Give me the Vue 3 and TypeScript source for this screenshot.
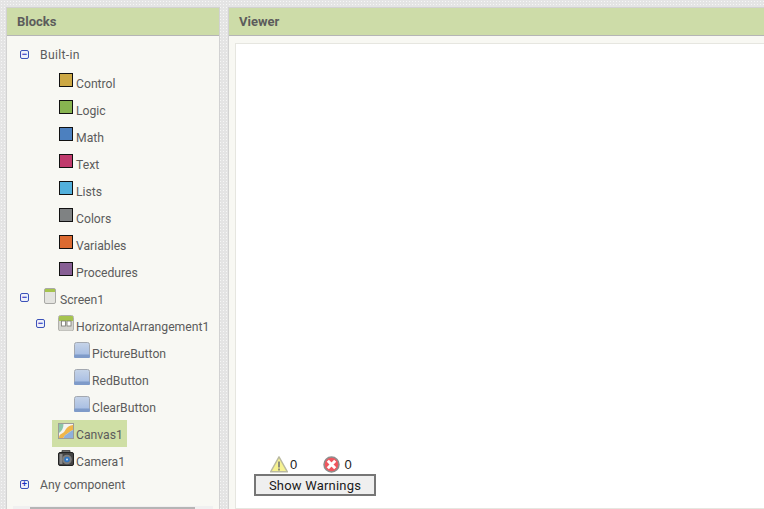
<script setup lang="ts">
type Row = {
  label: string;
  indent: number;
  toggle?: "minus" | "plus";
  swatch?: string;
  icon?: string;
  selected?: boolean;
};

const rows: Row[] = [
  { label: "Control", indent: 1, swatch: "#cca844" },
  { label: "Logic", indent: 1, swatch: "#88b450" },
  { label: "Math", indent: 1, swatch: "#4c80bf" },
  { label: "Text", indent: 1, swatch: "#c03a6c" },
  { label: "Lists", indent: 1, swatch: "#52b0dc" },
  { label: "Colors", indent: 1, swatch: "#7f8283" },
  { label: "Variables", indent: 1, swatch: "#dc6a30" },
  { label: "Procedures", indent: 1, swatch: "#875f94" },
  { label: "Screen1", indent: 0, toggle: "minus", icon: "screen" },
  { label: "HorizontalArrangement1", indent: 1, toggle: "minus", icon: "arrangement" },
  { label: "PictureButton", indent: 2, icon: "button" },
  { label: "RedButton", indent: 2, icon: "button" },
  { label: "ClearButton", indent: 2, icon: "button" },
  { label: "Canvas1", indent: 1, icon: "canvas", selected: true },
  { label: "Camera1", indent: 1, icon: "camera" },
];
</script>

<template>
  <div class="page">
    <section class="panel blocks">
      <header class="head">Blocks</header>
      <div class="tree">
        <div class="top-row built-in">
          <span class="toggle">−</span>
          <span class="top-label">Built-in</span>
        </div>
        <div
          v-for="row in rows"
          :key="row.label"
          class="row"
          :class="`indent-${row.indent}`"
        >
          <span v-if="row.toggle" class="toggle">−</span>
          <div class="item" :class="{ selected: row.selected }">
            <span v-if="row.swatch" class="swatch" :style="{ background: row.swatch }"></span>
            <svg v-else-if="row.icon === 'screen'" class="icon" viewBox="0 0 16 16">
              <rect x="2.5" y="0.5" width="11" height="15" rx="1.5" fill="#e4e4e0" stroke="#a9a9a6" />
              <rect x="3" y="1" width="10" height="3" fill="#a6c44e" />
            </svg>
            <svg v-else-if="row.icon === 'arrangement'" class="icon" viewBox="0 0 16 16">
              <rect x="0.5" y="0.5" width="15" height="15.5" rx="2" fill="#d4d4cf" stroke="#b0b0ab" />
              <path d="M1 2 Q1 1 2 1 H14 Q15 1 15 2 V6 H1 Z" fill="#a6c44e" />
              <rect x="3.5" y="6" width="4" height="5" fill="#fff" stroke="#77776f" stroke-width="0.8" />
              <rect x="9" y="6" width="4" height="5" fill="#fff" stroke="#77776f" stroke-width="0.8" />
            </svg>
            <svg v-else-if="row.icon === 'button'" class="icon" viewBox="0 0 16 16">
              <defs>
                <linearGradient id="btn-fill" x1="0" y1="0" x2="0" y2="1">
                  <stop offset="0" stop-color="#c6d4e8" />
                  <stop offset="1" stop-color="#a2bae2" />
                </linearGradient>
              </defs>
              <rect x="0.5" y="0.5" width="15" height="15" rx="2" fill="url(#btn-fill)" stroke="#a3a8b0" />
              <rect x="0" y="12.5" width="16" height="3.5" rx="1" fill="#7f9bc9" />
            </svg>
            <svg v-else-if="row.icon === 'canvas'" class="icon" viewBox="0 0 16 16">
              <rect x="0.5" y="0.5" width="15" height="15" fill="#f4f4f0" stroke="#9c9c98" />
              <path d="M1 15 C1 11 4 11 6 9 C8 7 8 3 15 2 V7 C12 8 11 10 9 11 C7 12 6 13 5.5 15 Z" fill="#f0b64a" />
              <path d="M5.5 15 C6 13 7 12 9 11 C11 10 12 8 15 7 V15 Z" fill="#8fb0dc" />
              <path d="M2 1 H5.5 C5.5 5 4 8 1 10 V1 Z" fill="#8cc6a8" />
            </svg>
            <svg v-else-if="row.icon === 'camera'" class="icon" viewBox="0 0 16 16">
              <rect x="4" y="0" width="8" height="4" rx="1" fill="#6c6c6c" stroke="#333" stroke-width="0.8" />
              <rect x="0.5" y="2.5" width="15" height="13" rx="1.5" fill="#444" stroke="#222" />
              <rect x="1.5" y="4" width="3" height="10" fill="#888" />
              <circle cx="9" cy="9.5" r="4.8" fill="#7c7c7c" />
              <circle cx="9" cy="9.5" r="2.8" fill="#2f76c4" />
              <circle cx="9" cy="9.5" r="1" fill="#c8def4" />
            </svg>
            <span class="label">{{ row.label }}</span>
          </div>
        </div>
        <div class="top-row any">
          <span class="toggle">+</span>
          <span class="top-label">Any component</span>
        </div>
      </div>
      <div class="scrollbar"><div class="thumb"></div></div>
    </section>

    <section class="panel viewer">
      <header class="head">Viewer</header>
      <div class="viewer-body">
        <div class="canvas">
          <div class="warnings">
            <div class="counts">
              <svg class="status warn" viewBox="0 0 18 17">
                <path d="M9 0.8 L17.4 15.8 H0.6 Z" fill="#f6f291" stroke="#b9b9a0" stroke-width="1.4" stroke-linejoin="round" />
                <rect x="8" y="5.5" width="2" height="6" fill="#8f8f7a" />
                <rect x="8" y="12.5" width="2" height="2" fill="#8f8f7a" />
              </svg>
              <span class="count">0</span>
              <svg class="status error" viewBox="0 0 17 17">
                <circle cx="8.5" cy="8.5" r="7.5" fill="#f0565e" stroke="#8e8e8e" stroke-width="1.5" />
                <path d="M4.8 4.8 L12.2 12.2 M12.2 4.8 L4.8 12.2" stroke="#fff" stroke-width="3" />
              </svg>
              <span class="count">0</span>
            </div>
            <button class="show-warnings">Show Warnings</button>
          </div>
        </div>
      </div>
    </section>
  </div>
</template>

<style>
html,
body {
  margin: 0;
  overflow: hidden;
}
</style>

<style scoped>
.page {
  width: 764px;
  height: 509px;
  box-sizing: border-box;
  padding: 8px 0 0 7px;
  display: flex;
  gap: 10px;
  overflow: hidden;
  font-family: Roboto, "Liberation Sans", sans-serif;
  font-size: 12.2px;
  color: #5c5c5c;
  background-color: #e4e4e4;
  background-image: radial-gradient(#f6f6f6 0.7px, transparent 0.8px);
  background-size: 3px 3px;
}

.panel {
  display: flex;
  flex-direction: column;
  background: #f8f8f3;
  flex: none;
  box-shadow: 0 0 0 1px #d2d2d2;
}

.blocks {
  width: 212px;
  height: 501px;
  position: relative;
}

.viewer {
  width: 540px;
  height: 501px;
}

.head {
  height: 28px;
  line-height: 27px;
  box-sizing: border-box;
  padding-left: 10px;
  font-weight: 700;
  font-size: 13px;
  color: #5c5c5c;
  background: #cddca8;
  border-bottom: 1px solid #b5b5b5;
}

.tree {
  padding: 5px 0 0 0;
}

.top-row {
  display: flex;
  align-items: center;
  padding-left: 13px;
}

.built-in {
  height: 26px;
  margin-bottom: 2px;
}

.any {
  height: 20px;
}

.toggle {
  width: 9px;
  height: 9px;
  flex: none;
  box-sizing: border-box;
  border: 1px solid #3c52b8;
  border-radius: 2px;
  background: #eef0fa;
  color: #1a2fc0;
  font: 700 9px/7px "Liberation Sans", sans-serif;
  text-align: center;
  overflow: hidden;
}

.top-label {
  margin: 2px 0 0 11px;
}

.built-in .top-label {
  letter-spacing: 0.3px;
}

.row {
  position: relative;
  display: flex;
  align-items: center;
  height: 27px;
}

.row .toggle {
  position: absolute;
  top: 7px;
}

.indent-0 {
  padding-left: 29px;
}

.indent-0 .toggle {
  left: 13px;
  top: 8px;
}

.indent-1 {
  padding-left: 45px;
}

.indent-1 .toggle {
  left: 29px;
}

.indent-2 {
  padding-left: 61px;
}

.item {
  display: flex;
  align-items: flex-start;
  height: 27px;
  box-sizing: border-box;
  padding: 4px 4px 0 6px;
}

.item.selected {
  background: #cfdfa5;
}

.swatch {
  width: 12px;
  height: 12px;
  border: 1px solid #111;
  box-sizing: content-box;
  flex: none;
  margin: 0 3px 0 1px;
}

.icon {
  width: 16px;
  height: 16px;
  flex: none;
  margin: -1px 2px 0 0;
}

.label {
  line-height: 18px;
  margin-top: 2px;
  white-space: nowrap;
}

.scrollbar {
  position: absolute;
  left: 6px;
  right: 6px;
  bottom: 0;
  height: 3px;
  background: #f0f0f0;
}

.thumb {
  height: 2px;
  margin: 1px 18px 0 17px;
  background: #b5b5b5;
}

.viewer-body {
  flex: 1;
  display: flex;
  padding: 7px 0 0 6px;
  min-height: 0;
}

.canvas {
  flex: 1;
  background: #fff;
  border: 1px solid #e6e6e0;
  display: flex;
  flex-direction: column;
  justify-content: flex-end;
  padding: 0 0 12px 18px;
}

.warnings {
  width: 122px;
}

.counts {
  display: flex;
  align-items: center;
  padding-left: 16px;
  height: 20px;
  font-family: "Liberation Sans", sans-serif;
  font-size: 13px;
  color: #222;
}

.status {
  flex: none;
}

.warn {
  width: 18px;
  height: 17px;
}

.error {
  width: 17px;
  height: 17px;
}

.count {
  width: 37px;
  padding-left: 2px;
  box-sizing: border-box;
}

.count:last-child {
  padding-left: 4px;
}

.show-warnings {
  display: block;
  width: 122px;
  height: 22px;
  padding: 0;
  box-sizing: border-box;
  border: 2px solid #767676;
  background: #efefef;
  font-family: Roboto, sans-serif;
  font-size: 13px;
  letter-spacing: 0.2px;
  color: #1a1a1a;
}
</style>
